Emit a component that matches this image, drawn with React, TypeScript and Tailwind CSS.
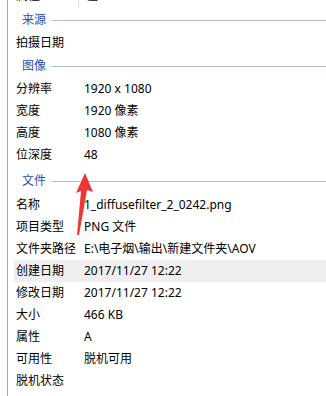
const font = { fontFamily: '"Noto Sans", "Noto Sans CJK SC", "Microsoft YaHei", sans-serif' }

type Row = { label: string; value?: string; active?: boolean }

function Header({ title, tall }: { title: string; tall?: boolean }) {
  return (
    <div className={`flex items-center pl-[14px] ${tall ? 'h-[28px] pt-[2px]' : 'h-[24px]'}`}>
      <span className="text-[#2a4db3] leading-none">{title}</span>
      <div className="ml-[5px] h-px flex-1 bg-[#b3bdd6]" />
    </div>
  )
}

function Item({ label, value, active }: Row) {
  return (
    <div className={`flex h-[22px] items-center ml-[6px] ${active ? 'bg-[#efefef]' : ''}`}>
      <span className="w-[70px] shrink-0 pl-[2px] text-black leading-none">{label}</span>
      <span className="whitespace-nowrap text-black leading-none">{value}</span>
    </div>
  )
}

const source: Row[] = [{ label: '拍摄日期' }]

const image: Row[] = [
  { label: '分辨率', value: '1920 x 1080' },
  { label: '宽度', value: '1920 像素' },
  { label: '高度', value: '1080 像素' },
  { label: '位深度', value: '48' },
]

const file: Row[] = [
  { label: '名称', value: '1_diffusefilter_2_0242.png' },
  { label: '项目类型', value: 'PNG 文件' },
  { label: '文件夹路径', value: 'E:\\电子烟\\输出\\新建文件夹\\AOV' },
  { label: '创建日期', value: '2017/11/27 12:22', active: true },
  { label: '修改日期', value: '2017/11/27 12:22' },
  { label: '大小', value: '466 KB' },
  { label: '属性', value: 'A' },
  { label: '可用性', value: '脱机可用' },
  { label: '脱机状态' },
]

export default function App() {
  return (
    <div className="relative w-[326px] h-[396px] overflow-hidden bg-white text-[12px]" style={font}>
      <div className="ml-[7px] h-full border-l border-[#a9a9a9]">
        {/* column header, scrolled mostly out of view */}
        <div className="flex h-[8px] overflow-hidden ml-[6px]">
          <div className="w-[64px] pl-[2px] -mt-[10px] leading-none">属性</div>
          <div className="w-px bg-[#e5e5e5]" />
          <div className="pl-[7px] -mt-[10px] leading-none">值</div>
        </div>

        <Header title="来源" />
        {source.map((r) => (
          <Item key={r.label} {...r} />
        ))}

        <Header title="图像" />
        {image.map((r) => (
          <Item key={r.label} {...r} />
        ))}

        <Header title="文件" tall />
        {file.map((r) => (
          <Item key={r.label} {...r} />
        ))}
      </div>

      {/* red annotation arrow */}
      <svg className="absolute left-0 top-0" width="326" height="396" viewBox="0 0 326 396">
        <polygon
          points="85,173 93,192 87,190 79,235 77,235 81,191 76,193"
          fill="#ef3535"
        />
      </svg>
    </div>
  )
}
